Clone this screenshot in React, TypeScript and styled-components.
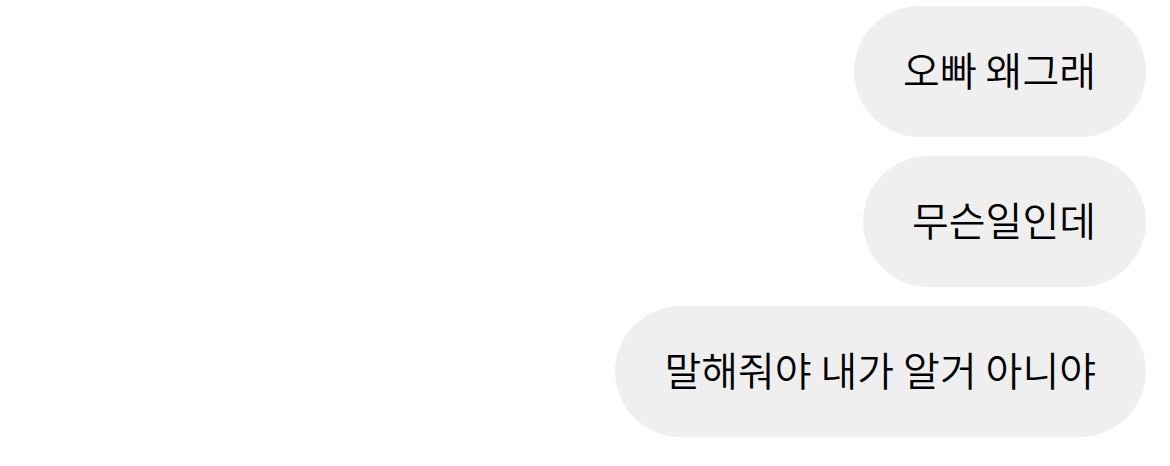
import styled, { createGlobalStyle } from "styled-components";

const GlobalStyle = createGlobalStyle`
  body {
    margin: 0;
    background: #ffffff;
    font-family: "Noto Sans CJK KR", "Noto Sans", sans-serif;
  }
`;

const ChatList = styled.div`
  display: flex;
  flex-direction: column;
  align-items: flex-end;
  gap: 19px;
  padding: 6px 24px 0 0;
`;

const Bubble = styled.div`
  box-sizing: border-box;
  height: 131px;
  display: flex;
  align-items: center;
  padding: 0 50px 5px 49px;
  border-radius: 66px;
  background: #efefef;
  color: #000000;
  font-size: 40px;
  font-weight: 350;
  white-space: nowrap;
`;

const messages = ["오빠 왜그래", "무슨일인데", "말해줘야 내가 알거 아니야"];

function App() {
  return (
    <>
      <GlobalStyle />
      <ChatList>
        {messages.map((text) => (
          <Bubble key={text}>{text}</Bubble>
        ))}
      </ChatList>
    </>
  );
}
export default App;
